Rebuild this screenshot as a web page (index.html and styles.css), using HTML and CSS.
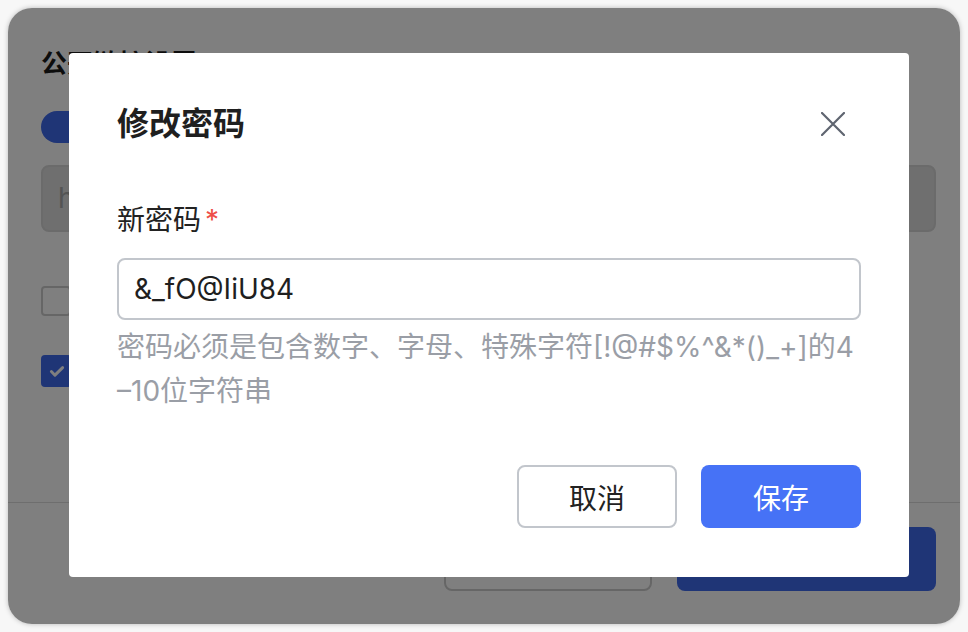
FILE: index.html
```html
<!DOCTYPE html>
<html lang="zh-CN">
<head>
<meta charset="utf-8">
<title>修改密码</title>
<link rel="stylesheet" href="styles.css">
</head>
<body>
<div class="card">
  <div class="card-body">
    <h2 class="page-title">公开链接设置</h2>
    <div class="toggle"><span class="knob"></span></div>
    <div class="link-input">https://share.example.com/s/8f2a</div>
    <div class="check-row"><span class="box"></span><span class="check-label">允许下载</span></div>
    <div class="check-row"><span class="box checked"><svg viewBox="0 0 16 16" width="18" height="18"><path d="M3 8.5l3.2 3.2L13 5" fill="none" stroke="#fff" stroke-width="2.6" stroke-linecap="round" stroke-linejoin="round"/></svg></span><span class="check-label">设置访问密码</span></div>
  </div>
  <div class="card-footer">
    <button class="bg-btn outline">取消</button>
    <button class="bg-btn primary">确定</button>
  </div>
  <div class="overlay">
    <div class="modal">
      <div class="modal-header">
        <h1 class="modal-title">修改密码</h1>
        <button class="close" aria-label="关闭">
          <svg viewBox="0 0 24 24" width="24" height="24"><path d="M1 1L23 23M23 1L1 23" stroke="#5f6570" stroke-width="2.2" stroke-linecap="round" fill="none"/></svg>
        </button>
      </div>
      <div class="field-label">新密码<span class="req">*</span></div>
      <div class="field-input">&amp;_fO@IiU84</div>
      <p class="hint">密码必须是包含数字、字母、特殊字符[!@#$%^&amp;*()_+]的4<wbr>–10位字符串</p>
      <div class="modal-footer">
        <button class="btn cancel">取消</button>
        <button class="btn save">保存</button>
      </div>
    </div>
  </div>
</div>
</body>
</html>
```
FILE: styles.css
```css
* { box-sizing: border-box; }
html, body { margin: 0; padding: 0; }
body {
  background: #f7f7f7;
  font-family: "Inter", "Noto Sans CJK SC", sans-serif;
  width: 968px;
  height: 632px;
  overflow: hidden;
  padding: 8px;
}
.card {
  position: relative;
  width: 952px;
  height: 616px;
  background: #fff;
  border-radius: 24px;
  overflow: hidden;
  box-shadow: 0 0 5px rgba(0,0,0,0.25);
  display: flex;
  flex-direction: column;
}
.card-body {
  flex: 1;
  padding: 38px 24px 0 33px;
  display: flex;
  flex-direction: column;
  align-items: flex-start;
}
.page-title {
  margin: 0;
  font-size: 26px;
  line-height: 36px;
  font-weight: 700;
  color: #1a1a1a;
}
.toggle {
  margin-top: 29px;
  width: 64px;
  height: 32px;
  border-radius: 16px;
  background: #3f6aec;
  position: relative;
}
.knob {
  position: absolute;
  right: 3px;
  top: 3px;
  width: 26px;
  height: 26px;
  border-radius: 50%;
  background: #fff;
}
.link-input {
  margin-top: 22px;
  width: 100%;
  height: 67px;
  border: 2px solid #d6d6d6;
  border-radius: 8px;
  background: #dedede;
  color: #a8a8a8;
  font-size: 28px;
  line-height: 63px;
  padding: 0 15px;
}
.check-row {
  display: flex;
  align-items: center;
  gap: 14px;
  margin-top: 50px;
  font-size: 26px;
  color: #222;
}
.check-row + .check-row { margin-top: 33px; }
.box {
  width: 30px;
  height: 30px;
  border: 2px solid #cdcdcd;
  border-radius: 4px;
  background: #fff;
  display: flex;
  align-items: center;
  justify-content: center;
}
.box.checked {
  width: 31px;
  height: 32px;
  background: #3f6aec;
  border-color: #3f6aec;
}
.card-footer {
  border-top: 1px solid #dcdcdc;
  padding: 24px 24px 33px;
  display: flex;
  justify-content: flex-end;
  gap: 25px;
}
.bg-btn {
  height: 64px;
  border-radius: 8px;
  font-family: inherit;
  font-size: 28px;
}
.bg-btn.outline {
  width: 208px;
  background: #fff;
  border: 2px solid #ccc;
  color: #222;
}
.bg-btn.primary {
  width: 259px;
  background: #3f6aec;
  border: none;
  color: #fff;
}
.overlay {
  position: absolute;
  inset: 0;
  background: rgba(0,0,0,0.5);
  padding: 45px 0 0 61px;
}
.modal {
  width: 840px;
  background: #fff;
  border-radius: 4px;
  padding: 48px 48px 49px;
}
.modal-header {
  display: flex;
  justify-content: space-between;
  align-items: center;
  height: 46px;
}
.modal-title {
  margin: 0;
  font-size: 32px;
  line-height: 46px;
  font-weight: 600;
  color: #1f1f1f;
}
.close {
  background: none;
  border: none;
  padding: 0;
  width: 56px;
  height: 46px;
  display: flex;
  align-items: center;
  justify-content: center;
}
.field-label {
  margin-top: 53px;
  font-size: 28px;
  line-height: 40px;
  color: #222;
}
.req {
  color: #ee4d48;
  margin-left: 4px;
}
.field-input {
  margin-top: 18px;
  height: 62px;
  border: 2px solid #c2c6cc;
  border-radius: 8px;
  padding: 0 15px;
  font-size: 28px;
  line-height: 58px;
  color: #1f1f1f;
}
.hint {
  margin: 5px 0 0;
  font-size: 28px;
  line-height: 44px;
  color: #9a9ea6;
}
.modal-footer {
  margin-top: 52px;
  display: flex;
  justify-content: flex-end;
  gap: 24px;
}
.btn {
  width: 160px;
  height: 63px;
  border-radius: 8px;
  font-family: inherit;
  font-size: 28px;
}
.btn.cancel {
  background: #fff;
  border: 2px solid #c2c6cc;
  color: #222;
}
.btn.save {
  background: #4672f6;
  border: none;
  color: #fff;
}
```
